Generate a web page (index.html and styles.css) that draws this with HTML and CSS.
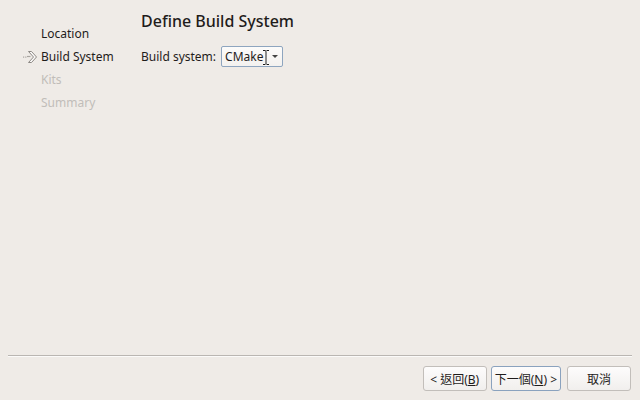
FILE: index.html
```html
<!DOCTYPE html>
<html>
<head>
<meta charset="utf-8">
<link rel="stylesheet" href="styles.css">
</head>
<body>
<div class="wizard">
  <div class="content">
    <ul class="steps">
      <li class="step done"><span class="marker"></span>Location</li>
      <li class="step current"><span class="marker"><svg width="16" height="14" viewBox="0 0 16 14"><rect x="1" y="6.5" width="1.2" height="1.2" fill="#a8a4a0"/><rect x="3.2" y="6.5" width="1.2" height="1.2" fill="#a8a4a0"/><path d="M5 6.5h3.5" stroke="#a8a4a0" stroke-width="1.2"/><path d="M6.5 1.5h3l5 5.5-5 5.5h-3l5-5.5z" stroke="#8c8884" stroke-width="1" fill="#fbfaf9" stroke-linejoin="round"/></svg></span>Build System</li>
      <li class="step todo"><span class="marker"></span>Kits</li>
      <li class="step todo"><span class="marker"></span>Summary</li>
    </ul>
    <div class="page">
      <h1 class="title">Define Build System</h1>
      <div class="field">
        <label class="label">Build system:</label>
        <div class="combo">
          <span class="combo-text">CMake</span>
          <svg class="ibeam" width="8" height="17" viewBox="0 0 8 17"><path d="M1 1.5h2.2l.8.8.8-.8H7M4 2.3v12.4M1 15.5h2.2l.8-.8.8.8H7" stroke="#fff" stroke-width="2.2" fill="none"/><path d="M1 1.5h2.2l.8.8.8-.8H7M4 2.3v12.4M1 15.5h2.2l.8-.8.8.8H7" stroke="#1a1a1a" stroke-width="1" fill="none"/></svg>
          <span class="arrow"></span>
        </div>
      </div>
    </div>
  </div>
  <div class="separator"></div>
  <div class="buttons">
    <button class="btn">&lt; 返回(<u>B</u>)</button>
    <button class="btn default">下一個(<u>N</u>) &gt;</button>
    <button class="btn cancel">取消</button>
  </div>
</div>
</body>
</html>
```
FILE: styles.css
```css
html, body {
  margin: 0;
  padding: 0;
}
body {
  width: 640px;
  height: 400px;
  background: #efebe7;
  font-family: "Noto Sans", "Noto Sans CJK TC", sans-serif;
  font-size: 12px;
  color: #1f1c1b;
  overflow: hidden;
}
.wizard {
  display: flex;
  flex-direction: column;
  height: 400px;
}
.content {
  flex: 1;
  display: flex;
}
.steps {
  list-style: none;
  margin: 0;
  padding: 22px 0 0 22px;
  width: 119px;
  box-sizing: border-box;
}
.step {
  display: flex;
  align-items: center;
  height: 23px;
  line-height: 23px;
  white-space: nowrap;
}
.marker {
  width: 19px;
  display: flex;
  align-items: center;
}
.step.todo {
  color: #c1bdb9;
}
.page {
  padding: 10px 0 0 22px;
}
.title {
  margin: 0;
  font-size: 16px;
  font-weight: 500;
  line-height: 22px;
  color: #1f1c1b;
}
.field {
  display: flex;
  align-items: center;
  margin-top: 14px;
}
.label {
  margin-right: 5px;
}
.combo {
  display: flex;
  align-items: center;
  height: 19px;
  padding: 0 4px 0 3px;
  border: 1px solid #8ea5bf;
  border-radius: 2px;
  background: linear-gradient(#fcfbfa, #f3f1ef);
}
.combo-text {
  line-height: 19px;
}
.ibeam {
  margin-left: -1px;
  margin-top: 1px;
}
.arrow {
  width: 0;
  height: 0;
  margin-left: 2px;
  border-left: 3px solid transparent;
  border-right: 3px solid transparent;
  border-top: 3px solid #444;
}
.separator {
  margin: 0 8px;
  height: 1px;
  background: #bab6b2;
  border-bottom: 1px solid #fbfaf9;
}
.buttons {
  display: flex;
  justify-content: flex-end;
  gap: 4px;
  padding: 9px 9px 9px 0;
}
.btn {
  font-family: "Noto Sans", "Noto Sans CJK TC", sans-serif;
  font-size: 12px;
  color: #1f1c1b;
  height: 25px;
  padding: 0 3px;
  min-width: 64px;
  border: 1px solid #c2beba;
  border-radius: 3px;
  background: linear-gradient(#fdfcfc, #f1efed);
}
.btn.default {
  border-color: #8aa2be;
}
.btn.cancel {
  margin-left: 2px;
}
.btn u {
  text-decoration: underline;
}
```
